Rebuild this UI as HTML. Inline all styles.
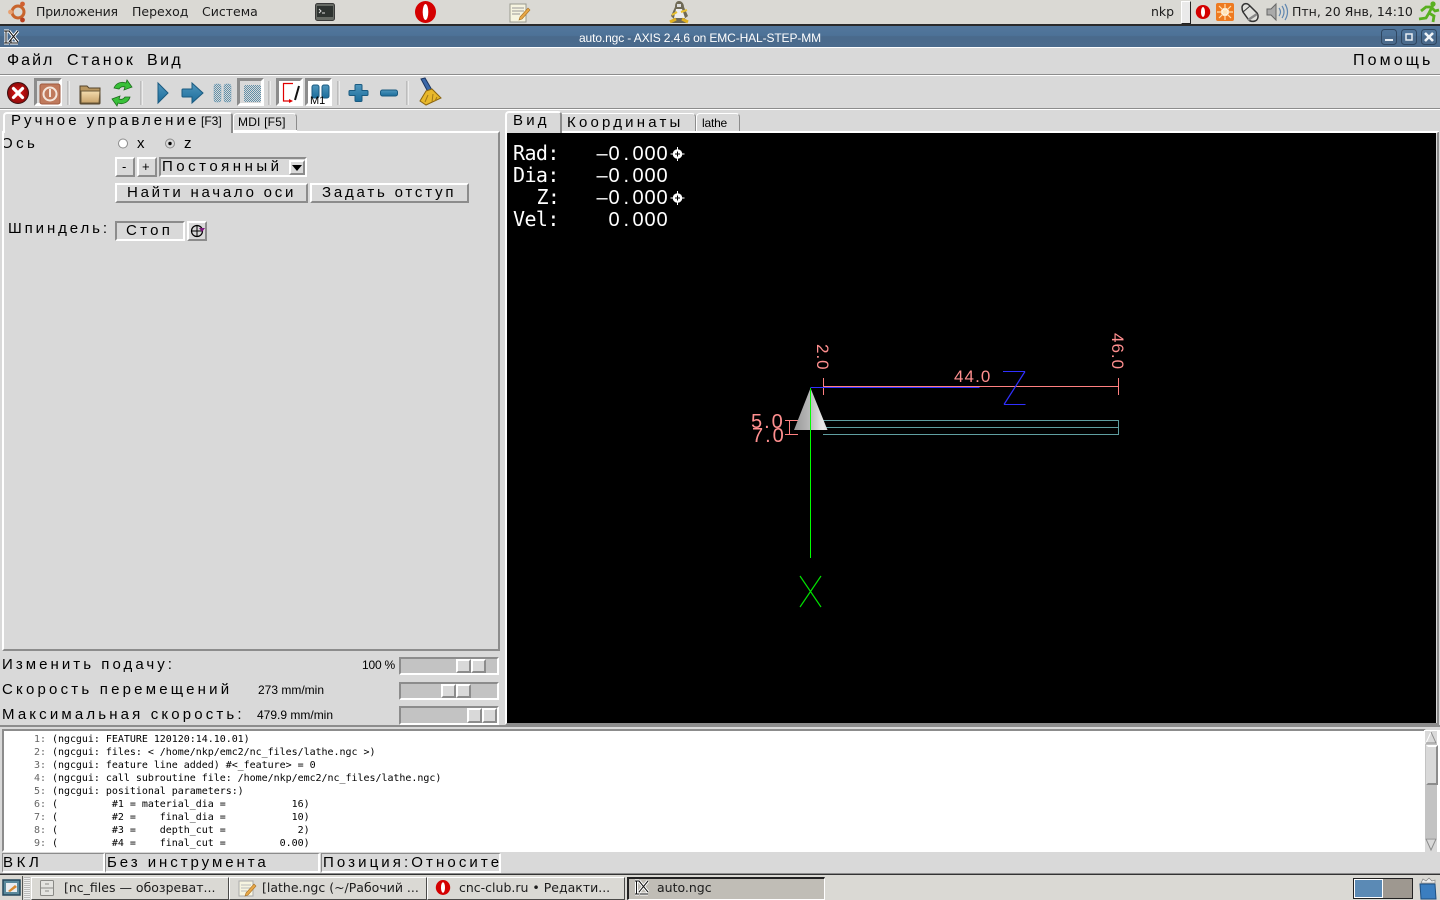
<!DOCTYPE html>
<html><head><meta charset="utf-8"><title>auto.ngc - AXIS</title>
<style>
html,body{margin:0;padding:0;width:1440px;height:900px;overflow:hidden;background:#d9d9d9}
.a{position:absolute;box-sizing:border-box}
.t{position:absolute;white-space:pre;line-height:1;color:#000}
.s{font-family:"Liberation Sans",sans-serif}
.d{font-family:"DejaVu Sans",sans-serif;color:#1c1c1c}
.w{font-size:15px;letter-spacing:3px;font-family:"Liberation Sans",sans-serif;font-weight:normal}
.n{font-size:16px;letter-spacing:2.9px;font-family:"Liberation Sans",sans-serif}
.m{font-family:"DejaVu Sans Mono",monospace;font-size:10px;letter-spacing:-.03px;color:#000}
.dro{font-family:"DejaVu Sans Mono",monospace;font-size:20px;letter-spacing:-.6px;color:#fff}
.up{border:2px solid;border-color:#fff #8c8c8c #8c8c8c #fff;background:#d9d9d9}
.dn{border:2px solid;border-color:#8c8c8c #fff #fff #8c8c8c;background:#d9d9d9}
.tb{position:absolute;top:877px;height:23px;border:1px solid;border-color:#fff #4a4a48 #4a4a48 #fff;box-sizing:border-box;background:#dad9d4}
</style></head><body>

<!-- top panel -->
<div class="a" style="left:0;top:0;width:1440px;height:24px;background:#dad9d4"></div>
<div class="a" style="left:0;top:24px;width:1440px;height:2px;background:#2a2a2a"></div>
<svg class="a" style="left:6px;top:0" width="24" height="24" viewBox="0 0 24 24"><circle cx="12" cy="12" r="6" fill="none" stroke="#c8642c" stroke-width="3"/><circle cx="4.5" cy="12" r="2.4" fill="#e8a070"/><circle cx="16.5" cy="4" r="2.4" fill="#d06030"/><circle cx="16.5" cy="20" r="2.4" fill="#b84020"/></svg>
<span class="t d" style="left:36px;top:6px;font-size:12.5px;letter-spacing:-.2px">Приложения</span>
<span class="t d" style="left:132px;top:6px;font-size:12.5px">Переход</span>
<span class="t d" style="left:202px;top:6px;font-size:12.5px">Система</span>
<svg class="a" style="left:314px;top:1px" width="22" height="22"><rect x="1.5" y="2.5" width="19" height="17" rx="2" fill="#666a64" stroke="#3a3a3a"/><rect x="3" y="5" width="16" height="11" fill="#2e3330"/><path d="M5 8l2 2-2 2M8 12h3" stroke="#ddd" fill="none"/></svg>
<svg class="a" style="left:413px;top:0" width="24" height="24"><ellipse cx="12.500" cy="12" rx="10.500" ry="11" fill="#d40000"/><ellipse cx="12.500" cy="12" rx="2.800" ry="8" fill="#fff"/></svg>
<svg class="a" style="left:507px;top:0" width="24" height="24"><rect x="3" y="4" width="16" height="18" fill="#f6f4e0" stroke="#9a9a90"/><path d="M5 8h12M5 11h12M5 14h8" stroke="#999"/><path d="M13 17l8-9 2 2-8 9-3 1z" fill="#e8a848" stroke="#a87020" stroke-width=".6"/></svg>
<svg class="a" style="left:667px;top:0" width="24" height="24"><path d="M12 1c-3 0-4 3-4 6l-4 9 3 3-3 4h15l-2-4 4-3-4-9c0-3-2-6-5-6z" fill="#6f6a56"/><path d="M9 9h6l3 9H7z" fill="#eee"/><path d="M3 22l6-3M21 22l-6-3" stroke="#e0b020" stroke-width="3"/><rect x="10" y="4" width="4" height="3" fill="#ddd"/><path d="M14 12l6-2M10 12l-5 3" stroke="#e8c030" stroke-width="2"/></svg>
<span class="t d" style="left:1151px;top:6px;font-size:12.5px">nkp</span>
<div class="a" style="left:1181px;top:1px;width:10px;height:23px;background:#eaeaea;border:1px solid;border-color:#fff #222 #222 #fff"></div>
<svg class="a" style="left:1194px;top:2px" width="18" height="20"><ellipse cx="9" cy="10" rx="7.200" ry="7" fill="#d40000"/><ellipse cx="9" cy="10" rx="2" ry="5" fill="#fff"/></svg>
<svg class="a" style="left:1216px;top:3px" width="18" height="18"><rect width="18" height="18" rx="2" fill="#ee7a20"/><circle cx="9" cy="9" r="4" fill="#fff"/><path d="M9 1v16M1 9h16M3 3l12 12M15 3L3 15" stroke="#ffe0b0" stroke-width="1.2"/></svg>
<svg class="a" style="left:1240px;top:1px" width="20" height="22"><path d="M2 6c1-4 5-4 7-2l8 8c2 3 1 7-2 8-3 1-6 0-7-2L3 11C2 9 2 7 2 6z" fill="#e0e0dc" stroke="#333" stroke-width="1.500"/><path d="M3 11l7-6" stroke="#333"/><path d="M8 19l9-6" stroke="#888" stroke-width="2.500"/></svg>
<svg class="a" style="left:1266px;top:2px" width="23" height="20"><path d="M1 7h4l5-5v16l-5-5H1z" fill="#aaa" stroke="#666"/><path d="M13 6q3 4 0 8M16 4q4 6 0 12M19 2q5 8 0 16" fill="none" stroke="#5f86b0" stroke-width="1.2"/></svg>
<span class="t d" style="left:1292px;top:6px;font-size:12.5px">Птн, 20 Янв, 14:10</span>
<svg class="a" style="left:1418px;top:0" width="22" height="24"><circle cx="15" cy="4" r="2.600" fill="#58b020"/><path d="M3 11l5-4h6l-3 6 5 3-1 6M11 13l-3 5-7 1M14 8l3 3 4-1" fill="none" stroke="#58b020" stroke-width="2.800"/></svg>

<!-- title -->
<div class="a" style="left:0;top:26px;width:1440px;height:21px;background:linear-gradient(#52769b,#4d7298 45%,#4a6a8c 50%,#4b6b8d)"></div>
<div class="a" style="left:0;top:47px;width:1440px;height:1px;background:#fff"></div>
<svg class="a" style="left:2px;top:28px" width="18" height="18"><path d="M2 3h5M4 3v12M2 15h5M7 3l9 11M16 3L7 14M8 15h8M9 12v3" stroke="#fff" stroke-width="3" fill="none"/><path d="M2 3h5M4 3v12M2 15h5M7 3l9 11M16 3L7 14M8 15h8M9 12v3" stroke="#111" stroke-width="1" fill="none"/></svg>
<span class="t s" style="left:579px;top:32px;font-size:12px;letter-spacing:-.12px;color:#fff">auto.ngc - AXIS 2.4.6 on EMC-HAL-STEP-MM</span>
<svg class="a" style="left:1380px;top:28px" width="60" height="18"><g fill="none" stroke="#2f4660"><rect x="1.5" y="1.5" width="15" height="15" rx="3"/><rect x="21.5" y="1.5" width="15" height="15" rx="3"/><rect x="41.5" y="1.5" width="15" height="15" rx="3"/></g><rect x="5" y="11" width="8" height="2" fill="#e8edf2"/><rect x="26" y="6" width="6" height="6" fill="none" stroke="#e8edf2" stroke-width="1.500"/><path d="M45 5l8 8M53 5l-8 8" stroke="#f0f3f6" stroke-width="2.600"/></svg>

<!-- menu -->
<div class="a" style="left:0;top:48px;width:1440px;height:27px;background:#d9d9d9;border-bottom:1px solid #8c8c8c"></div>
<div class="a" style="left:0;top:75px;width:1440px;height:1px;background:#fff"></div>
<span class="t n" style="left:7px;top:53px;letter-spacing:2px">Файл</span>
<span class="t n" style="left:67px;top:53px;letter-spacing:2.700px">Станок</span>
<span class="t n" style="left:147px;top:53px;letter-spacing:2.400px">Вид</span>
<span class="t n" style="left:1353px;top:53px;letter-spacing:3.100px">Помощь</span>

<!-- toolbar -->
<div class="a" style="left:0;top:108px;width:1440px;height:1px;background:#8c8c8c"></div>
<div class="a" style="left:0;top:109px;width:1440px;height:1px;background:#fff"></div>
<div class="a dn" style="left:34px;top:78px;width:28px;height:28px;border-width:3px"></div>
<div class="a dn" style="left:237px;top:78px;width:27px;height:28px;border-width:3px"></div>
<div class="a dn" style="left:276px;top:78px;width:27px;height:28px;border-width:3px;background:#fff"></div>
<div class="a dn" style="left:305px;top:78px;width:27px;height:28px;border-width:3px;background:#fff"></div>
<svg class="a" style="left:0;top:76px" width="450" height="32">
<defs>
<linearGradient id="b" x1="0" y1="0" x2="0" y2="1"><stop offset="0" stop-color="#4f96bd"/><stop offset="1" stop-color="#1b6d9b"/></linearGradient>
<radialGradient id="r"><stop offset="0" stop-color="#e81818"/><stop offset="1" stop-color="#8c0a0a"/></radialGradient>
<linearGradient id="f" x1="0" y1="0" x2="0" y2="1"><stop offset="0" stop-color="#f3dcae"/><stop offset="1" stop-color="#c9a36a"/></linearGradient>
<pattern id="ch" width="2" height="2" patternUnits="userSpaceOnUse"><rect width="2" height="2" fill="#d9d9d9"/><rect width="1" height="1" fill="#5f8fa8"/><rect x="1" y="1" width="1" height="1" fill="#5f8fa8"/></pattern>
</defs>
<g stroke="#a0a0a0" stroke-width="1"><path d="M68 5v24M141 5v24M269 5v24M338 5v24M407 5v24"/></g>
<g stroke="#fff"><path d="M69 5v24M142 5v24M270 5v24M339 5v24M408 5v24"/></g>
<circle cx="18" cy="17" r="10.500" fill="url(#r)" stroke="#3a1010"/><path d="M13.500 12.500l9 9M22.500 12.500l-9 9" stroke="#fff" stroke-width="3.200" stroke-linecap="round"/>
<rect x="40" y="8" width="20" height="20" rx="2" fill="#c07a5c" stroke="#a05a40"/><circle cx="50" cy="18" r="6.500" fill="none" stroke="#f4e6dc" stroke-width="2"/><path d="M50 13v8" stroke="#f4e6dc" stroke-width="2"/>
<path d="M80 10h7l2 2h11v15q0 1-1 1H81q-1 0-1-1z" fill="#b89660" stroke="#54442c"/><path d="M81 15h19l-1 12H81z" fill="url(#f)" stroke="#6c5a3a"/>
<path d="M114 12a9 9 0 0 1 12-5l1-3 5 7-8 3 1-3a5 5 0 0 0-6 2zM130 21a9 9 0 0 1-12 6l-1 3-5-7 8-3-1 3a5 5 0 0 0 6-2z" fill="#38c038" stroke="#1c6c1c" stroke-width=".8"/>
<path d="M158 7l10 10-10 10z" fill="url(#b)" stroke="#1a5a80"/>
<path d="M183 13h9V7l11 10-11 10v-6h-9q-1 0-1-1v-6q0-1 1-1z" fill="url(#b)" stroke="#1a5a80"/>
<rect x="214" y="8" width="7" height="18" rx="2" fill="url(#ch)" stroke="#7fa6bc" stroke-width=".5"/><rect x="224" y="8" width="7" height="18" rx="2" fill="url(#ch)" stroke="#7fa6bc" stroke-width=".5"/>
<rect x="244" y="9" width="17" height="17" rx="2" fill="url(#ch)"/>
<path d="M293 7.500h-9.500v17.500h8" fill="none" stroke="#e00000" stroke-width="1.200"/><path d="M289 23l4 2-4 2z" fill="#e00000"/><path d="M299 10l-4 14" stroke="#111" stroke-width="2"/>
<rect x="312" y="9" width="7" height="13" rx="2" fill="url(#b)" stroke="#1a5a80"/><rect x="322" y="9" width="7" height="13" rx="2" fill="url(#b)" stroke="#1a5a80"/>
<text x="310" y="28" font-family="Liberation Sans,sans-serif" font-size="11" fill="#000">M1</text>
<path d="M355 10q0-1 1-1h5q1 0 1 1v5h5q1 0 1 1v3q0 1-1 1h-5v5q0 1-1 1h-5q-1 0-1-1v-5h-5q-1 0-1-1v-3q0-1 1-1h5z" fill="url(#b)" stroke="#1a5a80" transform="translate(0,-.5)"/>
<rect x="380.500" y="14" width="17" height="6" rx="2" fill="url(#b)" stroke="#1a5a80"/>
<path d="M421 3l4-1 7 12-4 2z" fill="#3a67a8" stroke="#1a3560"/><path d="M426 15l6-2 9 9-15 7-6-4z" fill="#e8b82c" stroke="#8a6410"/><path d="M428 19l-3 7M433 18l-1 8M437 21l-2 4" stroke="#a07818"/>
</svg>

<!-- left notebook -->
<div class="a" style="left:2px;top:131px;width:498px;height:520px;border:2px solid;border-color:#fff #8c8c8c #8c8c8c #fff"></div>
<div class="a" style="left:3px;top:112px;width:230px;height:21px;background:#d9d9d9;border:2px solid;border-color:#fff #8c8c8c transparent #fff;border-bottom:0;border-radius:4px 4px 0 0"></div>
<div class="a" style="left:233px;top:113px;width:64px;height:18px;background:#d9d9d9;border:1px solid;border-color:#fff #8c8c8c transparent #fff;border-bottom:0;border-radius:4px 4px 0 0"></div>
<div class="a" style="left:233px;top:130px;width:64px;height:1px;background:#fff"></div>
<span class="t w" style="left:11px;top:113px;letter-spacing:3.050px">Ручное управление</span>
<span class="t s" style="left:201px;top:115px;font-size:12px">[F3]</span>
<span class="t s" style="left:238px;top:116px;font-size:12px;letter-spacing:.2px">MDI [F5]</span>

<span class="t w" style="left:1px;top:136px;clip-path:inset(0 0 0 3px);letter-spacing:3.400px">Ось</span>
<svg class="a" style="left:116px;top:137px" width="60" height="14"><circle cx="7" cy="6.500" r="4.500" fill="#fff" stroke="#8c8c8c"/><circle cx="54" cy="6.500" r="4.500" fill="#d9d9d9" stroke="#8c8c8c"/><circle cx="54" cy="6.500" r="1.700" fill="#000"/></svg>
<span class="t s" style="left:137px;top:136px;font-size:15px">x</span>
<span class="t s" style="left:184px;top:136px;font-size:15px">z</span>

<div class="a up" style="left:115px;top:157px;width:20px;height:20px"></div>
<span class="t s" style="left:122px;top:160px;font-size:13px">-</span>
<div class="a up" style="left:137px;top:157px;width:20px;height:20px"></div>
<span class="t s" style="left:142px;top:160px;font-size:13px">+</span>
<div class="a dn" style="left:159px;top:157px;width:148px;height:20px"></div>
<span class="t w" style="left:162px;top:159px;letter-spacing:3.500px">Постоянный</span>
<div class="a up" style="left:289px;top:160px;width:16px;height:15px"></div>
<svg class="a" style="left:292px;top:165px" width="10" height="6"><path d="M0 0h10L5 6z" fill="#000"/></svg>
<div class="a up" style="left:115px;top:183px;width:193px;height:20px"></div>
<span class="t w" style="left:127px;top:185px;letter-spacing:2.750px">Найти начало оси</span>
<div class="a up" style="left:310px;top:183px;width:159px;height:20px"></div>
<span class="t w" style="left:322px;top:185px;letter-spacing:2.800px">Задать отступ</span>
<span class="t w" style="left:8px;top:221px;letter-spacing:2.900px">Шпиндель:</span>
<div class="a dn" style="left:115px;top:221px;width:70px;height:20px"></div>
<span class="t w" style="left:126px;top:223px;letter-spacing:3.300px">Стоп</span>
<div class="a up" style="left:187px;top:221px;width:20px;height:20px"></div>
<svg class="a" style="left:189px;top:223px" width="16" height="16"><circle cx="8" cy="8" r="5.500" fill="none" stroke="#000" stroke-width="1.200"/><path d="M8 3v10M3 8h10" stroke="#000"/><path d="M10 5h6l-3 4z" fill="#7a1a7a"/></svg>

<!-- feed -->
<span class="t w" style="left:2px;top:657px;letter-spacing:3.050px">Изменить подачу:</span>
<span class="t s" style="left:362px;top:659px;font-size:12px;letter-spacing:-.2px">100 %</span>
<span class="t w" style="left:2px;top:682px;letter-spacing:3.200px">Скорость перемещений</span>
<span class="t s" style="left:258px;top:684px;font-size:12px">273 mm/min</span>
<span class="t w" style="left:2px;top:707px;letter-spacing:3.150px">Максимальная скорость:</span>
<span class="t s" style="left:257px;top:709px;font-size:12px">479.9 mm/min</span>
<div class="a dn" style="left:399px;top:657px;width:100px;height:18px;background:#c3c3c3"></div>
<div class="a dn" style="left:399px;top:682px;width:100px;height:18px;background:#c3c3c3"></div>
<div class="a dn" style="left:399px;top:706px;width:100px;height:19px;background:#c3c3c3"></div>
<div class="a up" style="left:456px;top:659px;width:15px;height:14px"></div><div class="a up" style="left:471px;top:659px;width:15px;height:14px"></div>
<div class="a up" style="left:441px;top:684px;width:15px;height:14px"></div><div class="a up" style="left:456px;top:684px;width:15px;height:14px"></div>
<div class="a up" style="left:467px;top:708px;width:15px;height:15px"></div><div class="a up" style="left:482px;top:708px;width:15px;height:15px"></div>

<!-- right notebook -->
<div class="a" style="left:505px;top:131px;width:934px;height:594px;border:2px solid;border-color:#fff #8c8c8c #8c8c8c #fff;background:#d9d9d9"></div>
<div class="a" style="left:505px;top:111px;width:57px;height:22px;background:#d9d9d9;border:2px solid;border-color:#fff #8c8c8c transparent #fff;border-bottom:0;border-radius:4px 4px 0 0"></div>
<div class="a" style="left:562px;top:113px;width:134px;height:18px;background:#d9d9d9;border-right:1px solid #8c8c8c;border-top:1px solid #fff;border-radius:0 4px 0 0"></div>
<div class="a" style="left:696px;top:113px;width:44px;height:18px;background:#d9d9d9;border:1px solid;border-color:#fff #8c8c8c transparent #fff;border-bottom:0;border-radius:4px 4px 0 0"></div>
<div class="a" style="left:562px;top:131px;width:877px;height:1px;background:#fff"></div>
<div class="a" style="left:507px;top:133px;width:929px;height:590px;background:#000"></div>
<span class="t w" style="left:513px;top:113px;letter-spacing:3.200px">Вид</span>
<span class="t w" style="left:567px;top:115px;letter-spacing:3.200px">Координаты</span>
<span class="t s" style="left:702px;top:117px;font-size:12px;letter-spacing:-.2px">lathe</span>

<span class="t dro" style="left:513px;top:143px">Rad:</span>
<span class="t dro" style="left:513px;top:165px">Dia:</span>
<span class="t dro" style="left:525px;top:187px"> Z:</span>
<span class="t dro" style="left:513px;top:209px">Vel:</span>

<svg class="a" style="left:507px;top:133px" width="929" height="590" viewBox="507 133 929 590">
<defs><linearGradient id="c" x1="0" x2="1"><stop offset="0" stop-color="#989898"/><stop offset=".45" stop-color="#b8b8b8"/><stop offset=".85" stop-color="#e8e8e8"/><stop offset="1" stop-color="#dcdcdc"/></linearGradient></defs>
<g font-family="Liberation Sans,sans-serif" font-size="20" fill="#fff">
<text x="596.500 608.500 623.500 632.500 644.500 656.500" y="160">–0.000</text>
<text x="596.500 608.500 623.500 632.500 644.500 656.500" y="182">–0.000</text>
<text x="596.500 608.500 623.500 632.500 644.500 656.500" y="204">–0.000</text>
<text x="608.500 623.500 632.500 644.500 656.500" y="226">0.000</text>
</g>
<g fill="#fff"><circle cx="677.500" cy="154" r="4.800"/><path d="M677 147h1v14h-1zM670.500 153.500h14v1h-14z"/><circle cx="677.500" cy="198" r="4.800"/><path d="M677 191h1v14h-1zM670.500 197.500h14v1h-14z"/></g>
<g stroke="#000"><path d="M677.500 151.500v5M675 154h5"/><path d="M677.500 195.500v5M675 198h5"/></g>
<g shape-rendering="crispEdges">
<g stroke="#5f9ea0" stroke-width="1" fill="none"><path d="M823 420.500H1118.500M823 427.500H1118.500M823 434.500H1118.500M1118.500 420v15"/></g>
<g stroke="#ff8080" stroke-width="1" fill="none"><path d="M823 386.500H1118M823.500 378v17M1118.500 378v17M785 420.500h13M785 434.500h13M789.500 420v15"/></g>
</g>
<path d="M810.500 388L794 430H827.500z" fill="url(#c)"/>
<g shape-rendering="crispEdges"><path d="M810.500 388v170" stroke="#00ff00" stroke-width="1"/>
<path d="M810.500 387.500H979.500" stroke="#3030ff" stroke-width="1"/>
<path d="M1003 371.500h22M1004 404.500h21.500" fill="none" stroke="#3030ff" stroke-width="1"/></g>
<path d="M1025 371.500l-21 33" fill="none" stroke="#3030ff" stroke-width="1.200"/>
<path d="M800 576l21 31M821 576l-21 31" stroke="#00e000" stroke-width="1.200"/>
<g font-family="Liberation Sans,sans-serif" fill="#ff8f8f">
<text x="954" y="382" font-size="17" letter-spacing="1.100">44.0</text>
<text x="751" y="428" font-size="20" letter-spacing="2">5.0</text>
<text x="752" y="442" font-size="20" letter-spacing="2">7.0</text>
<text transform="translate(817,344) rotate(90)" font-size="17" letter-spacing="1">2.0</text>
<text transform="translate(1112,333) rotate(90)" font-size="17" letter-spacing="1">46.0</text>
</g>
</svg>

<!-- log -->
<div class="a" style="left:2px;top:729px;width:1424px;height:123px;background:#fff;border:2px solid;border-color:#8c8c8c transparent transparent #8c8c8c"></div>
<div class="a" style="left:0;top:725px;width:1440px;height:2px;background:#8c8c8c"></div>
<div class="a" style="left:0;top:727px;width:1440px;height:2px;background:#d9d9d9"></div>
<div class="a" style="left:1424px;top:730px;width:16px;height:122px;background:#fff"></div>
<div class="a" style="left:1425px;top:731px;width:12px;height:121px;background:#c3c3c3"></div>
<div class="a up" style="left:1426px;top:745px;width:12px;height:40px;border-color:#fff #8c8c8c #8c8c8c #d9d9d9"></div>
<svg class="a" style="left:1425px;top:731px" width="12" height="121"><path d="M0 0h12v13H0zM0 107h12v14H0z" fill="#d9d9d9"/><path d="M6 1L1 12h10z" fill="#d9d9d9" stroke="#fff"/><path d="M1 12h10L6 1" fill="none" stroke="#8c8c8c"/><path d="M1 108h10L6 119z" fill="#d9d9d9" stroke="#8c8c8c"/></svg>
<div class="t m" style="left:34px;top:733px;line-height:13px;color:#000"><span style="color:#666">1:</span> (ngcgui: FEATURE 120120:14.10.01)
<span style="color:#666">2:</span> (ngcgui: files: &lt; /home/nkp/emc2/nc_files/lathe.ngc &gt;)
<span style="color:#666">3:</span> (ngcgui: feature line added) #&lt;_feature&gt; = 0
<span style="color:#666">4:</span> (ngcgui: call subroutine file: /home/nkp/emc2/nc_files/lathe.ngc)
<span style="color:#666">5:</span> (ngcgui: positional parameters:)
<span style="color:#666">6:</span> (         #1 = material_dia =           16)
<span style="color:#666">7:</span> (         #2 =    final_dia =           10)
<span style="color:#666">8:</span> (         #3 =    depth_cut =            2)
<span style="color:#666">9:</span> (         #4 =    final_cut =         0.00)</div>

<!-- status -->
<div class="a" style="left:0;top:852px;width:1440px;height:22px;background:#d9d9d9"></div>
<div class="a dn" style="left:2px;top:853px;width:103px;height:20px;border-width:1px 2px 2px 1px"></div>
<div class="a dn" style="left:105px;top:853px;width:215px;height:20px;border-width:1px 2px 2px 1px"></div>
<div class="a dn" style="left:321px;top:853px;width:180px;height:20px;border-width:1px 2px 2px 1px"></div>
<span class="t w" style="left:3px;top:855px;letter-spacing:3.600px">ВКЛ</span>
<span class="t w" style="left:107px;top:855px;letter-spacing:2.950px">Без инструмента</span>
<span class="t w" style="left:323px;top:855px;width:176px;overflow:hidden;letter-spacing:3.100px">Позиция:Относите</span>

<!-- taskbar -->
<div class="a" style="left:0;top:873px;width:1440px;height:1px;background:#8c8c8c"></div>
<div class="a" style="left:0;top:874px;width:1440px;height:26px;background:#dad9d4;border-top:1px solid #333"></div>
<svg class="a" style="left:1px;top:877px" width="22" height="22"><rect x="2" y="3" width="17" height="15" fill="#5a8a9c" stroke="#25485c" stroke-width="1.500"/><rect x="5" y="6" width="11" height="9" fill="#e9edf0"/><path d="M7 14l7-6 2 2-7 5z" fill="#d98a30"/></svg>
<div class="a" style="left:22px;top:876px;width:1px;height:24px;background:#555"></div>
<div class="a" style="left:24px;top:877px;width:6px;height:23px;background:repeating-linear-gradient(0deg,#bbb 0 1px,#eee 1px 2px)"></div>
<div class="tb" style="left:31px;width:198px"></div>
<div class="tb" style="left:229px;width:198px"></div>
<div class="tb" style="left:427px;width:198px"></div>
<div class="a" style="left:627px;top:877px;width:198px;height:23px;background:#c0bdb6;border:1px solid;border-color:#222 #fff #fff #222;border-width:2px 1px 1px 2px"></div>
<svg class="a" style="left:38px;top:879px" width="18" height="18"><rect x="2.500" y="1.500" width="13" height="15" rx="1" fill="#e4e4e0" stroke="#8a8a86"/><path d="M3 9h12M7 5h4M7 12h4" stroke="#8a8a86"/></svg>
<svg class="a" style="left:237px;top:878px" width="20" height="20"><rect x="2" y="3" width="14" height="15" fill="#f6f4e0" stroke="#aaa"/><path d="M4 7h10M4 10h10M4 13h6" stroke="#bbb"/><path d="M9 15l8-9 2 2-8 9-3 1z" fill="#e8a848" stroke="#a87020" stroke-width=".6"/></svg>
<svg class="a" style="left:434px;top:879px" width="18" height="18"><ellipse cx="9" cy="8.500" rx="7.200" ry="7.500" fill="#d40000"/><ellipse cx="9" cy="8.500" rx="2" ry="5.300" fill="#fff"/></svg>
<svg class="a" style="left:633px;top:879px" width="18" height="18"><path d="M2 2h4M3.500 2v13M2 15h4M6 2l9 11M15 2L6 13M7 15h8" stroke="#fff" stroke-width="3" fill="none"/><path d="M2 2h4M3.500 2v13M2 15h4M6 2l9 11M15 2L6 13M7 15h8" stroke="#111" fill="none"/></svg>
<span class="t d" style="left:64px;top:882px;font-size:12.500px">[nc_files — обозреват...</span>
<span class="t d" style="left:262px;top:882px;font-size:12.500px">[lathe.ngc (~/Рабочий ...</span>
<span class="t d" style="left:459px;top:882px;font-size:12.500px">cnc-club.ru • Редакти...</span>
<span class="t d" style="left:657px;top:882px;font-size:12.500px">auto.ngc</span>
<div class="a" style="left:1353px;top:878px;width:60px;height:21px;background:#9e9890;border:1px solid #222"></div>
<div class="a" style="left:1354px;top:879px;width:29px;height:19px;background:#5b8ab5;border:1px solid #fff"></div>
<svg class="a" style="left:1417px;top:876px" width="22" height="24"><path d="M3 8h15l1 15H4z" fill="#3b7ec0" stroke="#1e4f80"/><path d="M4 7l2-4 3 2 3-3 3 3 3-1v3z" fill="#eee" stroke="#777" stroke-width=".6"/></svg>
</body></html>
